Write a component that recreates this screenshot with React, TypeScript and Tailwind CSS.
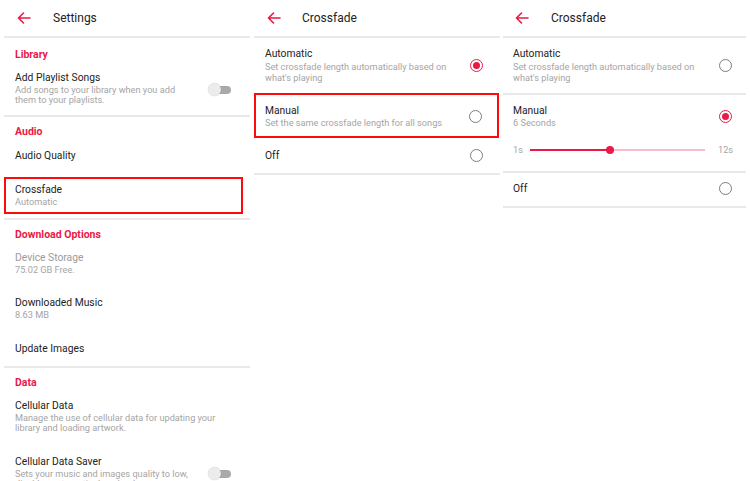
import React from "react";

const RED = "text-[#ec1846]";

function Arrow() {
  return (
    <svg width="14" height="12" viewBox="0 0 14 12" fill="none" className="shrink-0">
      <path d="M13 6H1.5M6.5 1L1.5 6l5 5" stroke="#ec1846" strokeWidth="1.6" strokeLinecap="round" strokeLinejoin="round" />
    </svg>
  );
}

function Header({ title, pad, gap }: { title: string; pad: string; gap: string }) {
  return (
    <div className={`h-[36px] shrink-0 flex items-center ${pad}`}>
      <Arrow />
      <span className={`${gap} text-[12px] text-[#222] leading-none`}>{title}</span>
    </div>
  );
}

function Divider({ cls }: { cls: string }) {
  return <div className={`h-[2px] shrink-0 bg-[#e9e9e9] ${cls}`} />;
}

function Section({ text, h }: { text: string; h: string }) {
  return (
    <div className={`${h} shrink-0 flex items-center pl-[15px] text-[10.5px] leading-[12px] font-bold ${RED}`}>{text}</div>
  );
}

function Title({ children, gray }: { children: React.ReactNode; gray?: boolean }) {
  return (
    <div className={`text-[10.3px] leading-[12px] ${gray ? "text-[#9b9b9b]" : "text-[#222]"}`}>{children}</div>
  );
}

function Sub({ children, lh = "leading-[10px]" }: { children: React.ReactNode; lh?: string }) {
  return <div className={`mt-px text-[9.2px] ${lh} text-[#a5a5a5] whitespace-nowrap`}>{children}</div>;
}

function Toggle() {
  return (
    <div className="relative w-[23px] h-[13px] mt-[11px] shrink-0">
      <div className="absolute right-0 top-[3px] w-[16px] h-[8px] rounded-full bg-[#a9a9a9]" />
      <div className="absolute left-0 top-0 w-[13px] h-[13px] rounded-full bg-[#ececec] shadow-[0_0_1px_rgba(0,0,0,0.25)]" />
    </div>
  );
}

function Radio({ on }: { on?: boolean }) {
  return on ? (
    <div className="w-[13px] h-[13px] rounded-full border-[1.5px] border-[#ec1846] flex items-center justify-center shrink-0">
      <div className="w-[7px] h-[7px] rounded-full bg-[#ec1846]" />
    </div>
  ) : (
    <div className="w-[13px] h-[13px] rounded-full border-[1.5px] border-[#7d7d7d] shrink-0" />
  );
}

function SettingsPanel() {
  return (
    <div className="w-[250px] shrink-0 flex flex-col">
      <Header title="Settings" pad="pl-[17px]" gap="ml-[22px]" />
      <Divider cls="ml-[4px]" />
      <Section text="Library" h="h-[33px]" />
      <div className="shrink-0 pl-[15px] pr-[19px] pt-px pb-[10px] flex justify-between">
        <div>
          <Title>Add Playlist Songs</Title>
          <Sub>
            Add songs to your library when you add
            <br />
            them to your playlists.
          </Sub>
        </div>
        <Toggle />
      </div>
      <Divider cls="ml-[4px]" />
      <Section text="Audio" h="h-[30px]" />
      <div className="shrink-0 h-[18px] flex items-center pl-[15px]">
        <Title>Audio Quality</Title>
      </div>
      <div className="shrink-0 mt-[12px] ml-[4px] w-[239px] border-2 border-[#ff0a0a] pt-[5px] pb-[5px] pl-[9px]">
        <Title>Crossfade</Title>
        <Sub>Automatic</Sub>
      </div>
      <Divider cls="ml-[4px] mt-[4px]" />
      <Section text="Download Options" h="h-[30px]" />
      <div className="shrink-0 pl-[15px] pt-[2px]">
        <Title gray>Device Storage</Title>
        <Sub>75.02 GB Free.</Sub>
      </div>
      <div className="shrink-0 pl-[15px] mt-[22px]">
        <Title>Downloaded Music</Title>
        <Sub>8.63 MB</Sub>
      </div>
      <div className="shrink-0 pl-[15px] mt-[23px]">
        <Title>Update Images</Title>
      </div>
      <Divider cls="ml-[4px] mt-[11px]" />
      <Section text="Data" h="h-[30px]" />
      <div className="shrink-0 pl-[15px] mt-[2px]">
        <Title>Cellular Data</Title>
        <Sub>
          Manage the use of cellular data for updating your
          <br />
          library and loading artwork.
        </Sub>
      </div>
      <div className="shrink-0 pl-[15px] pr-[19px] mt-[23px] flex justify-between">
        <div>
          <Title>Cellular Data Saver</Title>
          <Sub>
            Sets your music and images quality to low,
            <br />
            disables automatic downloads.
          </Sub>
        </div>
        <Toggle />
      </div>
    </div>
  );
}

function CrossfadeManualPanel() {
  return (
    <div className="w-[250px] shrink-0 flex flex-col">
      <Header title="Crossfade" pad="pl-[17px]" gap="ml-[21px]" />
      <Divider cls="ml-[4px]" />
      <div className="shrink-0 pl-[15px] pr-[17px] pt-[10px] pb-[10px] flex items-center justify-between">
        <div>
          <Title>Automatic</Title>
          <Sub lh="leading-[11px]">
            Set crossfade length automatically based on
            <br />
            what's playing
          </Sub>
        </div>
        <Radio on />
      </div>
      <div className="shrink-0 ml-[4px] w-[245px] border-2 border-[#ff0a0a] pt-[10px] pb-[8px] pl-[9px] pr-[15px] flex items-center justify-between">
        <div>
          <Title>Manual</Title>
          <Sub>Set the same crossfade length for all songs</Sub>
        </div>
        <Radio />
      </div>
      <div className="shrink-0 h-[35px] pl-[15px] pr-[17px] flex items-center justify-between">
        <Title>Off</Title>
        <Radio />
      </div>
      <Divider cls="ml-[4px]" />
    </div>
  );
}

function CrossfadeSliderPanel() {
  return (
    <div className="w-[250px] shrink-0 flex flex-col">
      <Header title="Crossfade" pad="pl-[15px]" gap="ml-[22px]" />
      <Divider cls="ml-[3px] mr-[4px]" />
      <div className="shrink-0 pl-[13px] pr-[18px] pt-[10px] pb-[10px] flex items-center justify-between">
        <div>
          <Title>Automatic</Title>
          <Sub lh="leading-[11px]">
            Set crossfade length automatically based on
            <br />
            what's playing
          </Sub>
        </div>
        <Radio />
      </div>
      <Divider cls="ml-[3px] mr-[4px]" />
      <div className="shrink-0 pl-[13px] pr-[18px] pt-[10px] flex items-center justify-between">
        <div>
          <Title>Manual</Title>
          <Sub>6 Seconds</Sub>
        </div>
        <Radio on />
      </div>
      <div className="shrink-0 mt-[16px] mb-[15px] h-[12px] pl-[13px] flex items-center">
        <span className="w-[17px] text-[9.2px] leading-none text-[#a5a5a5]">1s</span>
        <div className="relative w-[175px] h-[2px] bg-[#f8bccb]">
          <div className="absolute left-0 top-0 h-[2px] w-[80px] bg-[#ec1846]" />
          <div className="absolute left-[76px] top-[-3px] w-[8px] h-[8px] rounded-full bg-[#ec1846]" />
        </div>
        <span className="ml-[13px] text-[9.2px] leading-none text-[#a5a5a5]">12s</span>
      </div>
      <Divider cls="ml-[3px] mr-[4px]" />
      <div className="shrink-0 h-[33px] pl-[13px] pr-[18px] pt-[10px] flex items-start justify-between">
        <Title>Off</Title>
        <div className="-mt-[1px]">
          <Radio />
        </div>
      </div>
      <Divider cls="ml-[3px] mr-[4px]" />
    </div>
  );
}

export default function App() {
  return (
    <div className="w-[750px] h-[481px] bg-white overflow-hidden flex items-start font-['Roboto',sans-serif]">
      <SettingsPanel />
      <CrossfadeManualPanel />
      <CrossfadeSliderPanel />
    </div>
  );
}
